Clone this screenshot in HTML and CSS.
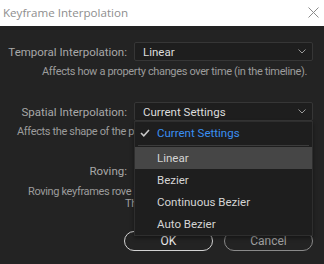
FILE: index.html
```html
<!DOCTYPE html>
<html lang="en">
<head>
  <meta charset="UTF-8" />
  <title>Keyframe Interpolation</title>
  <link rel="stylesheet" href="styles.css">
</head>
<body>
  <div class="dialog">
    <div class="titlebar">
      <span class="title">Keyframe Interpolation</span>
      <svg class="close" width="11" height="11" viewBox="0 0 11 11">
        <path d="M0.5 0.5L10.5 10.5M10.5 0.5L0.5 10.5" stroke="#8c8c8c" stroke-width="1" fill="none"/>
      </svg>
    </div>

    <div class="content">
      <div class="row">
        <label class="label">Temporal Interpolation:</label>
        <div class="select">
          <span>Linear</span>
          <svg class="chev" width="8" height="5" viewBox="0 0 8 5"><path d="M0.5 0.5L4 4L7.5 0.5" stroke="#9a9a9a" fill="none"/></svg>
        </div>
      </div>
      <p class="hint hint-temporal">Affects how a property changes over time (in the timeline).</p>

      <div class="row row-spatial">
        <label class="label">Spatial Interpolation:</label>
        <div class="select-wrap">
          <div class="select">
            <span>Current Settings</span>
            <svg class="chev" width="8" height="5" viewBox="0 0 8 5"><path d="M0.5 0.5L4 4L7.5 0.5" stroke="#9a9a9a" fill="none"/></svg>
          </div>
          <ul class="menu">
            <li class="item checked">
              <svg class="check" width="10" height="8" viewBox="0 0 10 8"><path d="M1 4L3.8 6.8L9 1" stroke="#c8c8c8" stroke-width="1.6" fill="none"/></svg>
              Current Settings
            </li>
            <li class="sep"></li>
            <li class="item active">Linear</li>
            <li class="item">Bezier</li>
            <li class="item">Continuous Bezier</li>
            <li class="item">Auto Bezier</li>
          </ul>
        </div>
      </div>
      <p class="hint hint-clip hint-spatial">Affects the shape of the pa</p>

      <div class="row row-roving">
        <label class="label">Roving:</label>
        <div class="check-box"></div>
      </div>
      <p class="hint hint-clip hint-roving">Roving keyframes rove i</p>
      <p class="hint hint-clip hint-roving2">Th</p>

      <div class="buttons">
        <button class="btn btn-ok">OK</button>
        <button class="btn btn-cancel">Cancel</button>
      </div>
    </div>
  </div>
</body>
</html>
```

FILE: styles.css
```css
html, body {
  margin: 0;
  padding: 0;
  background: #232323;
  height: 100%;
  overflow: hidden;
}

.dialog {
  width: 324px;
  height: 264px;
  font-family: Roboto, "Noto Sans", sans-serif;
}

.titlebar {
  height: 26px;
  background: #ffffff;
  display: flex;
  align-items: center;
  justify-content: space-between;
  padding: 0 5px 2px 3px;
  box-sizing: border-box;
}

.title {
  font-family: "Open Sans", sans-serif;
  font-size: 11.6px;
  color: #8e8e8e;
}

.content {
  padding-top: 16px;
  font-size: 11.5px;
}

.row {
  display: flex;
  align-items: center;
  height: 19px;
}

.label {
  width: 127px;
  text-align: right;
  color: #a8a8a8;
  margin-right: 7px;
}

.select-wrap {
  position: relative;
}

.select {
  width: 179px;
  height: 19px;
  box-sizing: border-box;
  border: 1px solid #363636;
  border-radius: 2px;
  background: #1e1e1e;
  color: #dcdcdc;
  display: flex;
  align-items: center;
  justify-content: space-between;
  padding: 0 6px 0 8px;
}

.chev {
  display: block;
}

.hint {
  margin: 0;
  height: 12px;
  line-height: 12px;
  font-size: 11px;
  letter-spacing: -0.35px;
  color: #9c9c9c;
  white-space: nowrap;
}

.hint-clip {
  width: 134px;
  box-sizing: border-box;
  overflow: hidden;
}

.hint-temporal {
  margin-top: 5px;
  padding-left: 42px;
}

.row-spatial {
  margin-top: 24px;
}

.hint-spatial {
  margin-top: 5px;
  padding-left: 17px;
}

.row-roving {
  margin-top: 23px;
}

.check-box {
  width: 11px;
  height: 11px;
  border: 1px solid #777;
  border-radius: 2px;
}

.hint-roving {
  margin-top: 6px;
  padding-left: 28px;
}

.hint-roving2 {
  padding-left: 125px;
}

.menu {
  position: absolute;
  top: 100%;
  left: 0;
  width: 179px;
  margin: 0;
  padding: 0;
  list-style: none;
  background: #1e1e1e;
  border: 1px solid #2e2e2e;
  box-sizing: border-box;
  box-shadow: 0 2px 4px rgba(0, 0, 0, 0.4);
  z-index: 2;
}

.item {
  height: 22px;
  line-height: 22px;
  padding-left: 22px;
  color: #d4d4d4;
  font-size: 11.5px;
  position: relative;
}

.item.checked {
  color: #3a8ff2;
}

.check {
  position: absolute;
  left: 5px;
  top: 7px;
}

.item.active {
  background: #464646;
}

.sep {
  height: 1px;
  background: #3c3c3c;
  margin: 1px 3px 1px;
}

.buttons {
  display: flex;
  justify-content: flex-end;
  gap: 11px;
  padding-right: 11px;
  margin-top: 21px;
}

.btn {
  width: 89px;
  height: 20px;
  border-radius: 10px;
  background: transparent;
  font-family: Roboto, sans-serif;
  font-size: 12px;
  padding: 0;
}

.btn-ok {
  border: 1px solid #d2d2d2;
  color: #ececec;
}

.btn-cancel {
  border: 1px solid #8a8a8a;
  color: #a0a0a0;
}
```
